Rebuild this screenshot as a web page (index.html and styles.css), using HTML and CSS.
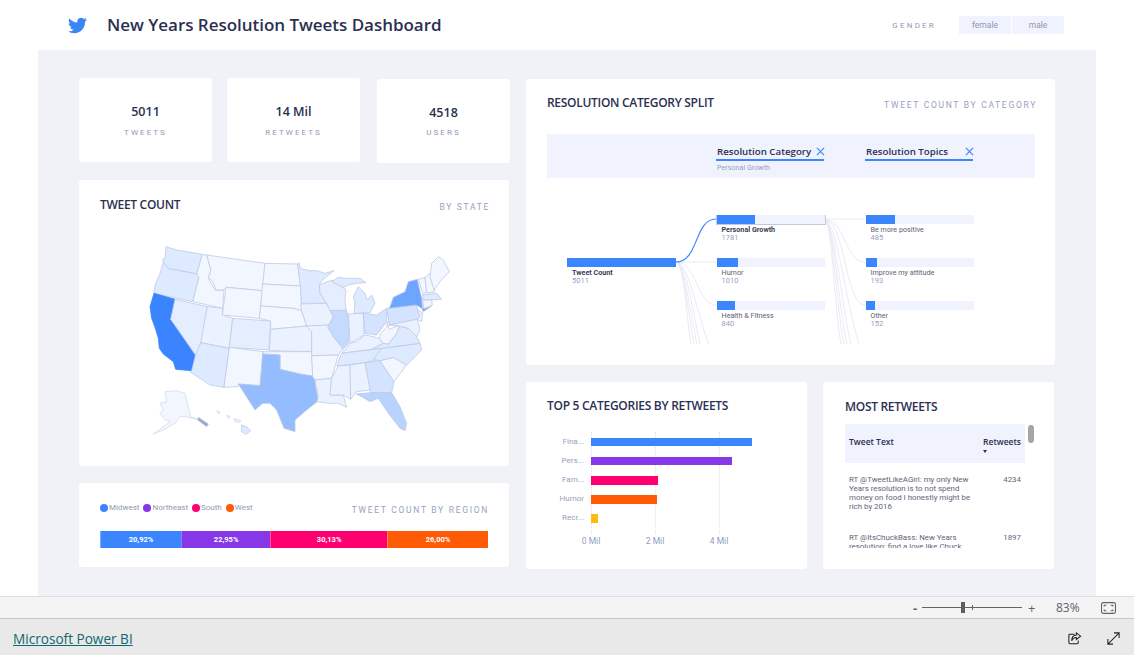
FILE: index.html
```html
<!DOCTYPE html>
<html lang="en">
<head>
<meta charset="utf-8">
<title>New Years Resolution Tweets Dashboard</title>
<link rel="stylesheet" href="styles.css">
</head>
<body>
<div class="page">
  <header class="topbar">
    <svg class="bird" viewBox="0 0 24 24"><path d="M23.95 4.57a10 10 0 0 1-2.82.77 4.96 4.96 0 0 0 2.16-2.72c-.95.55-2 .96-3.12 1.18a4.92 4.92 0 0 0-8.38 4.48C7.69 8.1 4.07 6.13 1.64 3.16a4.82 4.82 0 0 0-.67 2.48c0 1.71.87 3.21 2.19 4.1a4.9 4.9 0 0 1-2.23-.62v.06c0 2.38 1.7 4.37 3.95 4.83a5 5 0 0 1-2.21.08 4.94 4.94 0 0 0 4.6 3.42A9.87 9.87 0 0 1 0 19.54a14 14 0 0 0 7.56 2.21c9.05 0 14-7.5 14-13.98 0-.21 0-.42-.02-.63a9.94 9.94 0 0 0 2.46-2.55z"/></svg>
    <h1 class="page-title">New Years Resolution Tweets Dashboard</h1>
    <span class="gender-label">GENDER</span>
    <div class="slicer"><span class="slicer-btn">female</span><span class="slicer-btn">male</span></div>
  </header>

  <main class="canvas">
    <section class="col-left">
      <div class="kpis">
        <div class="card kpi"><div class="kpi-value">5011</div><div class="kpi-label">TWEETS</div></div>
        <div class="card kpi"><div class="kpi-value">14 Mil</div><div class="kpi-label">RETWEETS</div></div>
        <div class="card kpi kpi-low"><div class="kpi-value">4518</div><div class="kpi-label">USERS</div></div>
      </div>

      <div class="card map-card">
        <div class="card-head"><h2 class="card-title">TWEET COUNT</h2><span class="card-sub">BY STATE</span></div>
        <svg class="map" viewBox="0 0 990 600">
          <g class="states">
            <polygon class="s2" points="108,20 140,30 217,43 200,102 140,90 122,88 115,85 100,68 98,60 106,50"/>
            <polygon class="s2" points="100,68 115,85 122,88 140,90 200,102 207,113 188,185 72,160 75,135 90,100"/>
            <polygon class="s9" points="72,160 135,178 122,238 195,345 185,392 137,388 130,365 100,342 88,325 85,295 75,262 65,235 60,200"/>
            <polygon class="s1b" points="135,178 232,200 212,318 197,345 122,238"/>
            <polygon class="s0" points="230,45 243,90 235,115 255,150 282,150 278,205 188,185 207,113 200,102 217,43"/>
            <polygon class="s0" points="230,45 405,70 398,152 288,142 282,150 258,150 247,122 235,115 243,90"/>
            <polygon class="s0" points="288,142 398,152 388,235 277,225"/>
            <polygon class="s1" points="232,200 278,205 277,225 308,235 298,325 212,308"/>
            <polygon class="s1b" points="308,235 422,243 417,330 298,322"/>
            <polygon class="s2" points="212,308 298,325 282,442 240,435 180,395 185,392 197,345"/>
            <polygon class="s0" points="298,322 400,335 390,437 325,432 325,440 282,442"/>
            <polygon class="s0" points="405,70 503,72 512,138 398,132"/>
            <polygon class="s0" points="398,132 512,138 515,212 490,205 392,198"/>
            <polygon class="s0" points="392,198 490,205 515,212 530,258 422,268 422,243 388,235"/>
            <polygon class="s1" points="422,268 530,258 545,275 545,335 418,332"/>
            <polygon class="s0" points="398,342 400,335 545,335 548,410 510,402 450,388 450,345"/>
            <polygon class="s6" points="398,342 450,345 450,388 510,402 552,408 557,440 565,482 530,510 495,540 495,575 462,565 440,510 420,490 398,490 375,510 325,432 390,437"/>
            <polygon class="s2" points="503,72 507,68 512,86 540,92 560,92 585,100 612,92 575,122 568,135 570,160 590,190 515,190 512,150 508,110"/>
            <polygon class="s1" points="512,192 590,190 610,230 597,255 530,258 515,212"/>
            <polygon class="s1" points="528,258 597,255 610,290 640,325 625,345 545,347 545,275"/>
            <polygon class="s0" points="545,347 625,345 605,415 555,420 548,410"/>
            <polygon class="s1" points="555,420 605,415 600,465 640,465 650,502 625,490 600,490 560,485 565,470"/>
            <polygon class="s1b" points="568,135 605,120 640,143 648,150 645,180 648,212 600,212 590,190 570,160"/>
            <polygon class="s2" points="605,125 625,112 650,115 690,115 708,128 680,130 655,135 640,143"/>
            <polygon class="s2" points="672,220 675,190 670,170 685,140 705,160 712,180 725,165 735,190 720,218"/>
            <polygon class="s4" points="600,212 650,210 660,255 655,310 640,328 610,290 593,262 610,230"/>
            <polygon class="s1" points="655,222 700,220 702,285 660,310"/>
            <polygon class="s3" points="700,220 740,225 770,205 770,245 740,285 705,280"/>
            <polygon class="s1" points="660,310 680,305 705,285 730,290 748,295 760,310 725,328 635,340 650,325"/>
            <polygon class="s2" points="635,340 755,325 770,335 745,358 705,368 620,378"/>
            <polygon class="s1" points="625,378 660,375 662,478 640,465 600,465 605,415"/>
            <polygon class="s1" points="660,375 705,368 722,450 680,455 662,478"/>
            <polygon class="s3" points="705,368 750,362 792,425 785,458 722,458"/>
            <polygon class="s5" points="678,462 722,458 785,458 810,500 830,550 825,572 810,565 775,520 745,475 720,485 695,470"/>
            <polygon class="s0" points="750,362 790,352 830,375 792,425"/>
            <polygon class="s2" points="730,358 755,325 870,310 875,330 830,375 790,352 750,362"/>
            <polygon class="s2" points="725,328 760,310 775,312 800,280 808,258 835,265 860,290 870,310 755,325"/>
            <polygon class="s0" points="748,295 752,280 770,262 772,245 778,268 810,255 800,280 775,312 760,310"/>
            <polygon class="s3" points="770,205 858,195 870,230 862,238 778,255"/>
            <polygon class="s1" points="778,255 862,238 870,270 860,290 835,265 808,258"/>
            <polygon class="s7" points="778,205 790,172 825,155 835,125 862,118 875,175 878,205 905,198 880,215 875,205 858,195"/>
            <polygon class="s1" points="862,210 878,218 875,245 862,238 870,228"/>
            <polygon class="s2" points="878,165 920,160 935,178 905,180 878,180"/>
            <polygon class="s0" points="878,180 905,180 907,195 882,207"/>
            <polygon class="s0" points="865,118 885,112 890,150 880,165"/>
            <polygon class="s0" points="885,112 900,100 915,155 890,160"/>
            <polygon class="s0" points="905,70 925,50 940,60 958,95 930,125 912,150 900,110"/>
            <polygon class="s0 thin" points="105,455 140,452 165,460 182,530 210,540 190,535 165,530 150,530 135,550 100,570 70,582 120,545 105,540 90,520 100,510 90,490 110,485"/>
            <polygon class="s8" points="205,532 235,552 230,560 203,540"/>
            <polygon class="s2" points="335,555 350,560 362,572 348,583 335,575"/>
            <polygon class="s1 thin" points="260,512 270,516 266,522"/>
            <polygon class="s1 thin" points="290,525 300,530 295,536"/>
            <polygon class="s1 thin" points="312,535 333,542 328,548 314,544"/>
          </g>
        </svg>
      </div>

      <div class="card region-card">
        <div class="region-head">
          <div class="legend">
            <span class="legend-item"><i class="dot c-blue"></i>Midwest</span>
            <span class="legend-item"><i class="dot c-purple"></i>Northeast</span>
            <span class="legend-item"><i class="dot c-pink"></i>South</span>
            <span class="legend-item"><i class="dot c-orange"></i>West</span>
          </div>
          <span class="card-sub">TWEET COUNT BY REGION</span>
        </div>
        <div class="stack">
          <span class="seg c-blue" style="width:20.92%">20,92%</span>
          <span class="seg c-purple" style="width:22.95%">22,95%</span>
          <span class="seg c-pink" style="width:30.13%">30,13%</span>
          <span class="seg c-orange" style="width:26%">26,00%</span>
        </div>
      </div>
    </section>

    <section class="col-right">
      <div class="card tree-card">
        <div class="card-head"><h2 class="card-title">RESOLUTION CATEGORY SPLIT</h2><span class="card-sub">TWEET COUNT BY CATEGORY</span></div>
        <div class="levels">
          <div class="level">
            <div class="level-head"><span>Resolution Category</span><svg class="x" viewBox="0 0 10 10"><path d="M1 1l8 8M9 1l-8 8"/></svg></div>
            <div class="level-sel">Personal Growth</div>
          </div>
          <div class="level">
            <div class="level-head"><span>Resolution Topics</span><svg class="x" viewBox="0 0 10 10"><path d="M1 1l8 8M9 1l-8 8"/></svg></div>
          </div>
        </div>
        <div class="tree">
          <svg class="links" viewBox="0 0 487 129">
            <g class="link-grey">
              <path d="M129 47H169"/>
              <path d="M129 47C150 47 150 90 169 90"/>
              <path d="M129 47C137 47 139 100 144 129"/>
              <path d="M129 47C137 47 141 100 147 129"/>
              <path d="M129 47C138 47 143 100 150 129"/>
              <path d="M129 47C140 47 146 100 153 129"/>
              <path d="M129 47C142 47 150 100 162 129"/>
              <path d="M277 4H318"/>
              <path d="M277 4C298 4 298 47 318 47"/>
              <path d="M277 4C298 4 298 90 318 90"/>
              <path d="M277 4C285 4 287 90 294 129"/>
              <path d="M277 4C286 4 289 90 297 129"/>
              <path d="M277 4C287 4 291 90 300 129"/>
              <path d="M277 4C288 4 294 90 304 129"/>
              <path d="M277 4C290 4 299 90 312 129"/>
            </g>
            <path class="link-blue" d="M129 47C152 47 147 4 169 4"/>
          </svg>
          <div class="tree-col root-col">
            <div class="node"><div class="bar"><span class="fill" style="width:100%"></span></div><div class="node-name strong">Tweet Count</div><div class="node-val">5011</div></div>
          </div>
          <div class="tree-col">
            <div class="node"><div class="bar selected"><span class="fill" style="width:35.5%"></span></div><div class="node-name strong">Personal Growth</div><div class="node-val">1781</div></div>
            <div class="node"><div class="bar"><span class="fill" style="width:20.2%"></span></div><div class="node-name">Humor</div><div class="node-val">1010</div></div>
            <div class="node"><div class="bar"><span class="fill" style="width:16.8%"></span></div><div class="node-name">Health &amp; Fitness</div><div class="node-val">840</div></div>
          </div>
          <div class="tree-col">
            <div class="node"><div class="bar"><span class="fill" style="width:27.2%"></span></div><div class="node-name">Be more positive</div><div class="node-val">485</div></div>
            <div class="node"><div class="bar"><span class="fill" style="width:10.8%"></span></div><div class="node-name">Improve my attitude</div><div class="node-val">193</div></div>
            <div class="node"><div class="bar"><span class="fill" style="width:8.5%"></span></div><div class="node-name">Other</div><div class="node-val">152</div></div>
          </div>
        </div>
      </div>

      <div class="bottom-row">
        <div class="card top5-card">
          <h2 class="card-title">TOP 5 CATEGORIES BY RETWEETS</h2>
          <div class="chart">
            <div class="gridlines"><i class="gl"></i><i class="gl"></i><i class="gl"></i></div>
            <div class="chart-row"><span class="cat">Fina...</span><span class="hbar c-blue" style="width:161px"></span></div>
            <div class="chart-row"><span class="cat">Pers...</span><span class="hbar c-purple" style="width:141px"></span></div>
            <div class="chart-row"><span class="cat">Fam...</span><span class="hbar c-pink" style="width:67px"></span></div>
            <div class="chart-row"><span class="cat">Humor</span><span class="hbar c-orange" style="width:66px"></span></div>
            <div class="chart-row"><span class="cat">Recr...</span><span class="hbar c-yellow" style="width:7px"></span></div>
          </div>
          <div class="axis"><span class="tick">0 Mil</span><span class="tick">2 Mil</span><span class="tick">4 Mil</span></div>
        </div>

        <div class="card table-card">
          <h2 class="card-title">MOST RETWEETS</h2>
          <div class="table-wrap">
            <div class="thead"><span class="th-text">Tweet Text</span><span class="th-num">Retweets<i class="sort"></i></span></div>
            <div class="tbody">
              <div class="tr"><span class="td-text">RT @TweetLikeAGirl: my only New Years resolution is to not spend money on food I honestly might be rich by 2016</span><span class="td-num">4234</span></div>
              <div class="tr"><span class="td-text">RT @ItsChuckBass: New Years resolution: find a love like Chuck and Blair</span><span class="td-num">1897</span></div>
            </div>
            <i class="thumb"></i>
          </div>
        </div>
      </div>
    </section>
  </main>

  <div class="zoombar">
    <span class="zoom-minus">-</span>
    <div class="slider"><i class="slider-thumb"></i><i class="slider-tick"></i></div>
    <span class="zoom-plus">+</span>
    <span class="zoom-pct">83%</span>
    <svg class="fit" viewBox="0 0 14 11"><rect x=".5" y=".5" width="13" height="10" rx="1.5"/><path d="M3 4V3h2M9 3h2v1M3 7v1h2M9 8h2V7"/></svg>
  </div>

  <footer class="footer">
    <a class="pbi-link" href="#">Microsoft Power BI</a>
    <svg class="foot-icon share" viewBox="0 0 16 16"><path d="M8 3.500H3a1 1 0 0 0-1 1v8a1 1 0 0 0 1 1h8a1 1 0 0 0 1-1V10"/><path d="M10 2l4.500 3.500L10 9V7C7.500 7 6 8 5 10.500 5 7 7 4.500 10 4.200z"/></svg>
    <svg class="foot-icon expand" viewBox="0 0 16 16"><path d="M2 14L14 2M8.500 2H14v5.500M2 8.500V14h5.500"/></svg>
  </footer>
</div>
</body>
</html>
```

FILE: styles.css
```css
* { box-sizing: border-box; }
html, body { margin: 0; padding: 0; height: 100%; overflow: hidden; background: #fff; }
body { font-family: Roboto, "Liberation Sans", sans-serif; color: #2b2f52; }
h1, h2 { margin: 0; }

.page { display: flex; flex-direction: column; height: 655px; }

/* top bar */
.topbar { flex: 0 0 50px; display: flex; align-items: center; padding: 0 70px 0 68px; }
.bird { width: 19px; height: 19px; fill: #3b86f7; flex: none; margin-top: 1px; }
.page-title { margin: -2px 0 0 20px; font: 600 17px "Open Sans", sans-serif; letter-spacing: -.03px; color: #2b2f52; flex: 1; white-space: nowrap; }
.gender-label { font-size: 8px; letter-spacing: 2.2px; color: #8f99b8; margin-right: 23px; }
.slicer { display: flex; gap: 1px; }
.slicer-btn { width: 52px; height: 18px; display: flex; align-items: center; justify-content: center; background: #f0f2fe; font-size: 8.5px; color: #8f97b5; }

/* canvas */
.canvas { flex: 0 0 546px; margin: 0 38px; background: #f0f2f7; display: flex; padding: 28px 41px 0; gap: 16px; }
.col-left { flex: 0 0 431px; display: flex; flex-direction: column; }
.col-right { flex: 0 0 529px; display: flex; flex-direction: column; margin-top: 1px; }
.card { background: #fff; border-radius: 3px; }

/* KPIs */
.kpis { display: flex; gap: 15px; height: 84px; }
.kpi { flex: 0 0 133px; display: flex; flex-direction: column; align-items: center; padding-top: 25px; }
.kpi-low { margin: 1px 0 -1px 2px; }
.kpi-value { font: 600 12.5px/18px "Open Sans", sans-serif; color: #2b2f52; }
.kpi-label { margin-top: 7px; font-size: 8px; line-height: 10px; letter-spacing: 2.05px; color: #8f99b8; }
.kpi-low .kpi-label { margin-top: 6px; }

.card-head { display: flex; justify-content: space-between; align-items: center; }
.card-title { font: 600 12px/16px "Open Sans", sans-serif; color: #2b2f52; letter-spacing: -.3px; white-space: nowrap; }
.card-sub { font-size: 8.5px; letter-spacing: 1.7px; color: #98a1bf; white-space: nowrap; margin: 3px -1px 0 0; }

/* map */
.map-card { width: 430px; height: 286px; margin-top: 18px; padding: 17px 20px 0 21px; }
.map { display: block; width: 330px; height: 200px; margin: 27px 0 0 30px; }
.states polygon { stroke: #bfc9e4; stroke-width: 2.4; stroke-linejoin: round; }
.states .thin { stroke-width: 1.5; }
.s0 { fill: #f1f6ff; }
.s1 { fill: #ebf2ff; }
.s1b { fill: #e5eeff; }
.s2 { fill: #deeaff; }
.s3 { fill: #d4e3ff; }
.s4 { fill: #c4daff; }
.s5 { fill: #b9d3ff; }
.s6 { fill: #94bcff; }
.s7 { fill: #6ea6ff; }
.s8 { fill: #9aa6c4; }
.states .s9 { fill: #3b84ff; stroke: #3b84ff; }

/* region */
.region-card { width: 430px; height: 84px; margin-top: 17px; padding: 18px 21px 0 21px; }
.region-head { display: flex; justify-content: space-between; align-items: center; height: 14px; }
.legend { display: flex; gap: 4px; font-size: 8px; color: #8f99b8; margin-top: -1px; }
.legend-item { display: flex; align-items: center; gap: 1px; }
.dot { width: 8px; height: 8px; border-radius: 50%; display: block; }
.stack { display: flex; margin-top: 16px; height: 17px; width: 388px; }
.seg { display: flex; align-items: center; justify-content: center; color: #fff; font-size: 7.5px; font-weight: 700; border-left: 1px solid rgba(255,255,255,.3); }
.c-blue { background: #3b86ff; }
.c-purple { background: #8637e8; }
.c-pink { background: #ff0071; }
.c-orange { background: #ff5a06; }
.c-yellow { background: #ffbb0f; }

/* tree */
.tree-card { height: 286px; padding: 15px 19px 0 21px; }
.tree-card .card-head { height: 18px; }
.levels { display: flex; height: 44px; margin-top: 22px; background: #f0f2fe; padding: 10px 0 0 169px; gap: 41px; width: 488px; }
.level { width: 108px; }
.level-head { display: flex; align-items: center; justify-content: space-between; height: 17px; padding: 0 0 1px 1px; font: 600 9.7px "Open Sans", sans-serif; color: #2b2f52; border-bottom: 2px solid #3b86ff; white-space: nowrap; }
.x { width: 9px; height: 9px; stroke: #3b86ff; stroke-width: 1.3; fill: none; flex: none; margin-right: -1px; }
.level-sel { margin: 2px 0 0 1px; font-size: 7.2px; color: #98a1bf; }
.tree { position: relative; height: 129px; margin-top: 37px; overflow: hidden; display: flex; gap: 41px; padding-left: 20px; }
.links { position: absolute; left: 0; top: 0; width: 487px; height: 129px; fill: none; }
.link-grey path { stroke: #e4e6f1; stroke-width: .8; }
.link-blue { stroke: #3b86ff; stroke-width: 1.2; }
.tree-col { position: relative; flex: 0 0 108px; display: flex; flex-direction: column; }
.root-col { padding-top: 43px; flex-basis: 108.500px; }
.node { height: 43px; }
.bar { height: 8.500px; background: #f0f2fe; }
.bar.selected { outline: 1px solid #c5c8d8; }
.fill { display: block; height: 100%; background: #3b86ff; }
.node-name { margin: 2px 0 0 5px; font-size: 7.2px; line-height: 8px; color: #5d6073; white-space: nowrap; }
.node-name.strong { font-weight: 700; color: #3b3d55; }
.node-val { margin-left: 5px; font-size: 7.5px; line-height: 8px; color: #98a1bf; }

/* bottom row */
.bottom-row { display: flex; gap: 16px; margin-top: 17px; height: 187px; }
.top5-card { flex: 0 0 281px; padding: 16px 0 0 21px; position: relative; }
.top5-card .card-title { letter-spacing: -.28px; }
.chart { position: relative; margin-top: 18px; height: 102px; padding: 6px 0 0 44px; display: flex; flex-direction: column; gap: 10.700px; }
.gridlines { position: absolute; left: 44px; top: 0; bottom: 0; width: 129px; display: flex; justify-content: space-between; }
.gl { display: block; border-left: 1px dotted #dfe1ea; }
.chart-row { position: relative; height: 8.400px; }
.hbar { position: absolute; left: 0; top: 0; height: 100%; }
.cat { position: absolute; right: 100%; margin-right: 7px; top: -1px; font-size: 8px; line-height: 10px; color: #98a1bf; white-space: nowrap; }
.axis { display: flex; margin: 2px 0 0 32px; width: 152px; justify-content: space-between; }
.tick { width: 24px; text-align: center; font-size: 8.500px; line-height: 10px; color: #8f9cc5; white-space: nowrap; }

.table-card { flex: 0 0 231px; padding: 17px 0 0 22px; }
.table-wrap { position: relative; width: 180px; margin-top: 9px; }
.thead { display: flex; justify-content: space-between; height: 39px; background: #f0f2fe; padding: 12px 4px 0 4px; font: 600 8.500px/12px "Open Sans", sans-serif; color: #2b2f52; }
.th-num { position: relative; }
.sort { position: absolute; left: 0; top: 14px; border: 2.5px solid transparent; border-top: 3px solid #2b2f52; border-bottom: 0; }
.tbody { height: 85px; overflow: hidden; }
.tr { display: flex; justify-content: space-between; padding: 11.500px 4px 0 4px; height: 58px; font-size: 7.900px; line-height: 9px; color: #5f6478; }
.td-text { width: 124px; }
.thumb { position: absolute; left: 183px; top: 1px; width: 5.500px; height: 18px; border-radius: 3px; background: #a6a6a6; }

/* zoom bar */
.zoombar { flex: 0 0 23px; display: flex; align-items: center; background: #f4f4f4; border-top: 1px solid #dedede; border-bottom: 1px solid #c8c8c8; padding-left: 913px; color: #5f6368; font: 13px "Open Sans", sans-serif; }
.zoom-minus { width: 9px; font-weight: 700; }
.slider { position: relative; width: 100px; height: 1px; background: #666; }
.slider-thumb { position: absolute; left: 39px; top: -5px; width: 4px; height: 11px; background: #5f5f5f; }
.slider-tick { position: absolute; left: 50px; top: -2px; width: 1px; height: 5px; background: #666; }
.zoom-plus { margin-left: 6px; width: 28px; }
.zoom-pct { font-size: 12px; width: 45px; }
.fit { width: 15px; height: 12px; fill: none; stroke: #5f6368; }

/* footer */
.footer { flex: 0 0 36px; display: flex; align-items: center; background: #e9e9e9; padding: 2px 13px 0; }
.pbi-link { flex: 1; font: 13.600px "Open Sans", sans-serif; color: #0e6a70; text-decoration: underline; }
.foot-icon { width: 15px; height: 15px; fill: none; stroke: #222; stroke-width: 1.1; }
.share { margin-right: 24px; }
```
